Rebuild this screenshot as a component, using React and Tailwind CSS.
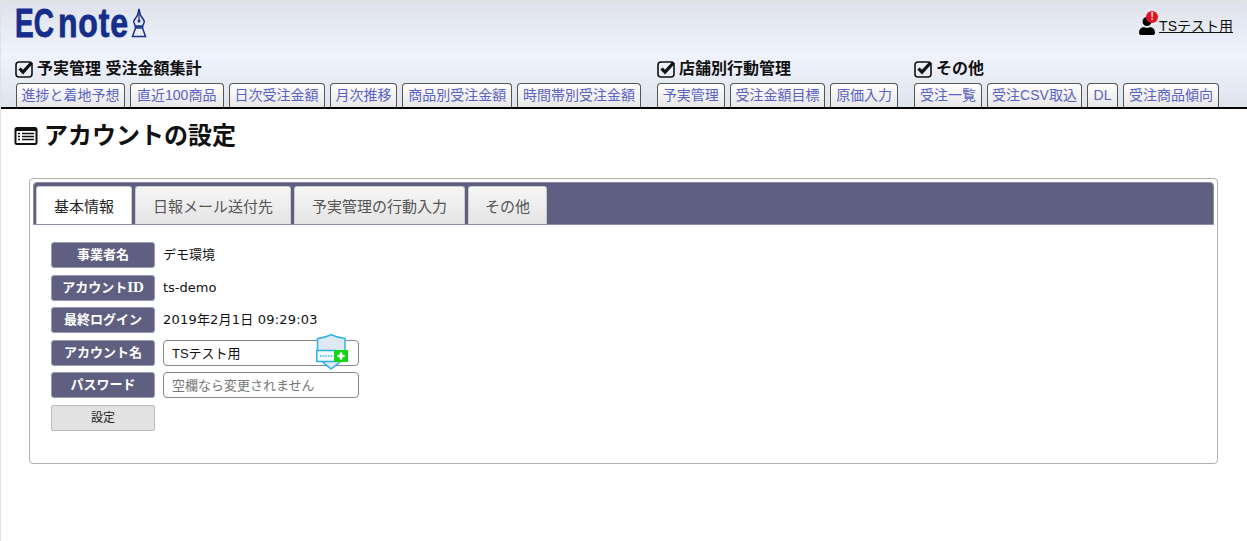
import React from 'react';
import { FaUser } from 'react-icons/fa';

const jp = "font-['Liberation_Sans','Noto_Sans_CJK_JP',sans-serif]";

const groups = [
  {
    title: '予実管理 受注金額集計',
    width: 'w-[627px]',
    linkPad: 'pl-[2px]',
    links: [
      ['進捗と着地予想', 'w-[109px]'],
      ['直近100商品', 'w-[94px]'],
      ['日次受注金額', 'w-[96px]'],
      ['月次推移', 'w-[68px]'],
      ['商品別受注金額', 'w-[110px]'],
      ['時間帯別受注金額', 'w-[124px]'],
    ],
  },
  {
    title: '店舗別行動管理',
    width: 'w-[242px]',
    linkPad: 'pl-[1px]',
    links: [
      ['予実管理', 'w-[68px]'],
      ['受注金額目標', 'w-[96px]'],
      ['原価入力', 'w-[68px]'],
    ],
  },
  {
    title: 'その他',
    width: 'w-[306px]',
    linkPad: 'pl-[1px]',
    links: [
      ['受注一覧', 'w-[68px]'],
      ['受注CSV取込', 'w-[95px]'],
      ['DL', 'w-[31px]'],
      ['受注商品傾向', 'w-[96px]'],
    ],
  },
];

const tabs = [
  ['基本情報', 'w-[96px]'],
  ['日報メール送付先', 'w-[156px]'],
  ['予実管理の行動入力', 'w-[171px]'],
  ['その他', 'w-[79px]'],
];

const CheckIcon = () => (
  <svg viewBox="0 0 20 18" className="w-5 h-[18px] shrink-0">
    <rect x="1" y="2" width="16" height="15" rx="3" fill="none" stroke="#111" strokeWidth="1.6" />
    <path d="M4.500 8.500l3.500 3.700L16.800 2.500" fill="none" stroke="#111" strokeWidth="3.200" />
  </svg>
);

const ListIcon = () => (
  <svg viewBox="0 0 24 20" className="w-6 h-5">
    <rect x="0.5" y="1" width="23" height="18" rx="2.500" fill="#111" />
    <rect x="2.500" y="5" width="19" height="12" fill="#fff" />
    <path d="M4 7.500h2M8 7.500h12M4 10.500h2M8 10.500h12M4 13.500h2M8 13.500h12" stroke="#111" strokeWidth="1.600" />
  </svg>
);

const PenIcon = () => (
  <svg viewBox="0 0 16 30" className="w-4 h-[30px]">
    <path d="M8 1l1.300 6 3.700 5.500c.6 1.200.4 2.300-.4 3.300L11.500 18h-7L3.400 15.800c-.8-1-.9-2.100-.4-3.300L6.700 7z" fill="none" stroke="#1a2f8a" strokeWidth="1.500" />
    <path d="M8 4v8" stroke="#1a2f8a" strokeWidth="1.200" />
    <circle cx="8" cy="13" r="1.500" fill="#1a2f8a" />
    <path d="M4.500 20h7l3 8.500h-13z" fill="none" stroke="#1a2f8a" strokeWidth="1.500" />
    <path d="M3.500 18.800h9" stroke="#1a2f8a" strokeWidth="1.500" />
  </svg>
);

const ShieldOverlay = () => (
  <svg viewBox="0 0 32 36" className="absolute left-[153px] top-[-6px] w-8 h-9">
    <path d="M1.500 4.500C6.500 4 10.500 3 15.200 .8c4.700 2.200 8.700 3.200 13.800 3.700V21c0 4-6.500 8-13.800 14C8 29 1.500 25 1.500 21z" fill="#dfe8f5" stroke="#2fb2ea" strokeWidth="1.500" />
    <rect x="0.800" y="16.500" width="19" height="11" fill="#f4f9fe" stroke="#2fb2ea" strokeWidth="1.500" />
    <path d="M4 22h13" stroke="#2fb2ea" strokeWidth="1.500" strokeDasharray="1.500 1.200" />
    <rect x="18" y="16" width="14" height="12" fill="#14d414" />
    <path d="M25 18.500v7M21.500 22h7" stroke="#fff" strokeWidth="2.500" />
  </svg>
);

const Label = ({ children }) => (
  <div className="w-[104px] h-[26px] shrink-0 flex items-center justify-center rounded-[3px] border border-[#9a9ab0] bg-[#5f5f82] text-white text-[13px] font-bold">
    {children}
  </div>
);

const Row = ({ label, children }) => (
  <div className="flex items-center gap-2">
    <Label>{label}</Label>
    {children}
  </div>
);

export default function App() {
  return (
    <div className={`${jp} min-h-[541px] bg-white border-l border-[#e2e2e2] text-[#111]`}>
      <header className="h-[109px] border-t-2 border-b-2 border-t-[#e2e2e2] border-b-black bg-gradient-to-b from-[#dfe2ea] via-[#eef3fd] to-[#dfe3ec] pl-[13px]">
        <div className="h-[48px] flex items-start justify-between pr-[14px]">
          <a className="flex items-end gap-[3px] mt-[6px] ml-px text-[#152e8c] font-bold font-['Liberation_Sans',sans-serif] leading-none">
            <span className="flex h-[30px] [-webkit-text-stroke:0.8px_#152e8c]">
              <span className="w-[43px] inline-block text-[40px] leading-[30px] scale-x-[0.7] origin-left whitespace-nowrap">EC</span>
              <span className="w-[70px] inline-block text-[40px] leading-[30px] tracking-[1px] scale-x-[0.8] origin-left whitespace-nowrap">note</span>
            </span>
            <PenIcon />
          </a>
          <div className="relative flex items-center mt-[14px] gap-[3px]">
            <FaUser className="w-[18px] h-[18px] text-black" />
            <span className="absolute left-[8px] top-[-5px] w-3 h-3 rounded-full bg-[#e8101c] text-white text-[10px] font-bold leading-3 text-center">!</span>
            <a className="text-[14px] underline leading-[20px]">TSテスト用</a>
          </div>
        </div>
        <nav className="flex gap-[15px]">
          {groups.map((group) => (
            <div key={group.title} className={group.width}>
              <div className="flex items-center gap-[2px] h-[33px] pt-[5px] pl-[1px] text-[16px] font-bold leading-none">
                <CheckIcon />
                <span>{group.title}</span>
              </div>
              <div className={`flex gap-[5px] ${group.linkPad}`}>
                {group.links.map(([link, width]) => (
                  <a key={link} className={`${width} h-[24px] text-center border border-b-0 border-[#555] rounded-t-[4px] bg-gradient-to-b from-white to-[#e6e6e6] text-[14px] leading-[23px] text-[#5a62c4] whitespace-nowrap`}>
                    {link}
                  </a>
                ))}
              </div>
            </div>
          ))}
        </nav>
      </header>

      <main className="pl-[14px] pr-[15px]">
        <h1 className="flex items-center gap-[6px] h-[54px] -ml-px text-[24px] font-bold">
          <ListIcon />
          アカウントの設定
        </h1>
        <section className="mt-[15px] mx-[14px] h-[286px] border border-[#b0b0b0] rounded-[4px] p-[3px]">
          <div className="h-[43px] bg-[#5f5f82] border border-[#8c8ca4] rounded-[4px] rounded-b-none flex items-end gap-[3px] pl-[2px]">
            {tabs.map(([tab, width], i) => (
              <div
                key={tab}
                className={
                  i === 0
                    ? `${width} h-[38px] text-center rounded-t-[3px] border border-b-0 border-[#ccc] bg-white text-[#222] text-[15px] leading-[40px]`
                    : `${width} h-[38px] text-center rounded-t-[3px] border border-b-0 border-[#ccc] bg-gradient-to-b from-[#f6f6f6] to-[#e4e4e4] text-[#555] text-[15px] leading-[40px]`
                }
              >
                {tab}
              </div>
            ))}
          </div>
          <div className="pt-[17px] pl-[18px] flex flex-col gap-[6.500px] text-[13px]">
            <Row label="事業者名">
              <span>デモ環境</span>
            </Row>
            <Row label={<span>アカウント<span className="font-['Liberation_Serif',serif] text-[15px]">ID</span></span>}>
              <span className="font-['DejaVu_Sans',sans-serif] text-[13px]">ts-demo</span>
            </Row>
            <Row label="最終ログイン">
              <span className="font-['DejaVu_Sans','Noto_Sans_CJK_JP',sans-serif] text-[13px] tracking-[0.2px]">2019年2月1日 09:29:03</span>
            </Row>
            <Row label="アカウント名">
              <div className="relative">
                <input readOnly value="TSテスト用" className="block w-[196px] h-[26px] px-2 bg-white border border-[#888] rounded-[4px] text-[13px] outline-none" />
                <ShieldOverlay />
              </div>
            </Row>
            <Row label="パスワード">
              <input readOnly placeholder="空欄なら変更されません" className="block w-[196px] h-[26px] px-2 bg-white border border-[#888] rounded-[4px] text-[13px] outline-none placeholder:text-[#777]" />
            </Row>
            <button className="w-[104px] h-[26px] rounded-[2px] border border-[#bbb] bg-[#e2e2e2] text-[12px] text-[#222]">設定</button>
          </div>
        </section>
      </main>
    </div>
  );
}
